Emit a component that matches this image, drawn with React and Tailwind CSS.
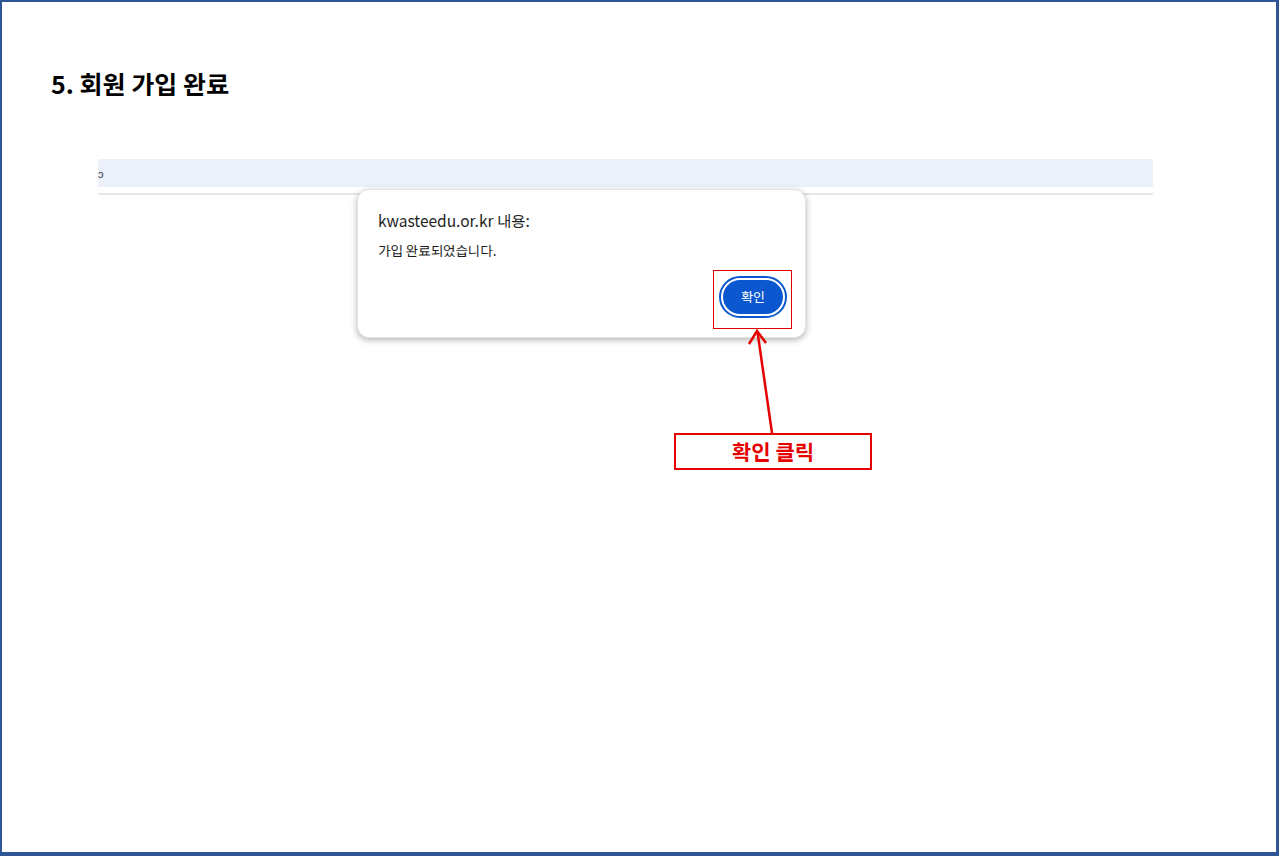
import React from 'react';

const font = { fontFamily: '"Noto Sans KR", "Noto Sans CJK KR", "Liberation Sans", sans-serif' };

const AlertDialog = () => (
    <div className="absolute left-[355px] top-[187px] w-[449px] h-[149px] bg-white rounded-[12px] border border-[#e3e3e3] shadow-[0_2px_6px_rgba(0,0,0,0.3)] flex flex-col">
        <div className="pl-[20px] pt-[19px]">
            <div className="text-[15.5px] leading-[22px] text-[#1f1f1f]">kwasteedu.or.kr 내용:</div>
            <div className="mt-[10px] text-[13.5px] leading-[18px] text-[#1f1f1f]">가입 완료되었습니다.</div>
        </div>
        <div className="mt-auto flex justify-end pr-[18px] pb-[19px]">
            <div className="w-[68px] h-[42px] rounded-full border-2 border-[#0b57d0] p-[2px] bg-white">
                <div className="w-full h-full rounded-full bg-[#0b57d0] flex items-center justify-center text-white text-[13px]">
                    확인
                </div>
            </div>
        </div>
    </div>
);

const Annotation = () => (
    <>
        <div className="absolute left-[711px] top-[268px] w-[79px] h-[59px] border border-[#e00000]" />
        <svg className="absolute left-0 top-0" width="1279" height="857">
            <line x1="770" y1="431" x2="755.5" y2="330" stroke="#e60000" strokeWidth="2.5" />
            <polyline points="747,342 755,329 764,341" fill="none" stroke="#e60000" strokeWidth="2.5" />
        </svg>
        <div className="absolute left-[672px] top-[431px] w-[198px] h-[37px] border-2 border-[#e60000] bg-white flex items-center justify-center">
            <span className="text-[21px] font-bold text-[#e60000] leading-none">확인 클릭</span>
        </div>
    </>
);

export default function App() {
    return (
        <div className="w-[1279px] h-[857px] bg-white" style={font}>
            <div className="relative w-[1279px] h-[856px] border-l-2 border-t-2 border-r-[3px] border-b-[4px] border-[#2f5597] overflow-hidden">
                <h1 className="pt-[64px] pl-[49px] text-[25px] font-bold text-black leading-[34px]">5. 회원 가입 완료</h1>
                <div className="mt-[59px] ml-[96px] w-[1055px] flex flex-col gap-[6px]">
                    <div className="h-[28px] bg-[#ebf0f9] flex items-center">
                        <span className="text-[11px] text-[#333] leading-none">ɔ</span>
                    </div>
                    <div className="h-[2px] bg-[#e6e6e6]" />
                </div>
                <AlertDialog />
                <Annotation />
            </div>
        </div>
    );
}
